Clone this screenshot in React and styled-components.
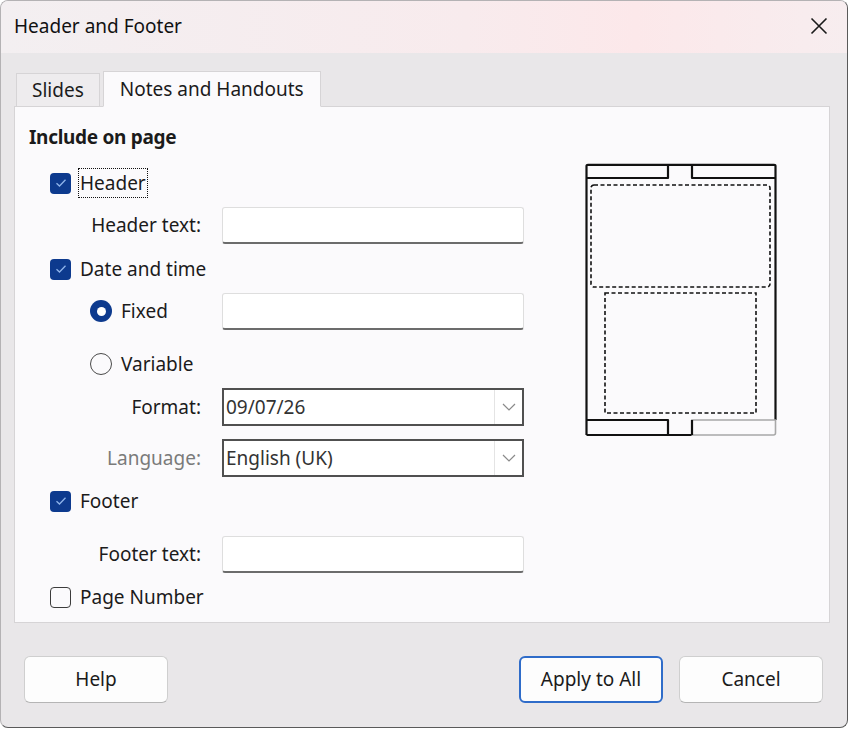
import React from "react";
import styled, { createGlobalStyle } from "styled-components";

const GlobalStyle = createGlobalStyle`
  html, body {
    margin: 0;
    padding: 0;
    background: #ffffff;
  }
  body {
    font-family: "Noto Sans", "Open Sans", sans-serif;
    color: #1b1b1b;
  }
`;

const Window = styled.div`
  width: 848px;
  height: 728px;
  box-sizing: border-box;
  display: flex;
  flex-direction: column;
  border: 1px solid #b4b2b4;
  border-right-color: #5a5a5a;
  border-bottom-color: #5a5a5a;
  border-radius: 8px;
  overflow: hidden;
  background: #e9e7e9;
`;

const TitleBar = styled.div`
  height: 52px;
  flex: none;
  display: flex;
  align-items: center;
  justify-content: space-between;
  padding: 0 10px 2px 13px;
  box-sizing: border-box;
  background: linear-gradient(90deg, #f3eff1 0%, #f8ebed 55%, #fce8ea 75%, #f7edef 100%);
`;

const Title = styled.div`
  font-size: 19px;
  color: #111;
`;

const CloseButton = styled.button`
  width: 36px;
  height: 36px;
  border: none;
  background: transparent;
  display: flex;
  align-items: center;
  justify-content: center;
  padding: 0;
`;

const Body = styled.div`
  flex: 1;
  display: flex;
  flex-direction: column;
  padding: 17px 17px 0 13px;
`;

const TabBar = styled.div`
  display: flex;
  align-items: flex-end;
  gap: 3px;
  padding-left: 2px;
  height: 36px;
  position: relative;
  z-index: 1;
`;

const Tab = styled.div`
  height: ${(p) => (p.$active ? "36px" : "34px")};
  box-sizing: border-box;
  padding: 0 ${(p) => (p.$active ? "16px" : "15px")};
  display: flex;
  align-items: center;
  font-size: 19px;
  background: ${(p) => (p.$active ? "#fbfafc" : "#eeecee")};
  border: 1px solid #d6d4d6;
  border-bottom: ${(p) => (p.$active ? "1px solid #fbfafc" : "1px solid #d6d4d6")};
  margin-bottom: -1px;
  color: #1b1b1b;
`;

const Panel = styled.div`
  height: 517px;
  box-sizing: border-box;
  background: #fbfafc;
  border: 1px solid #d6d4d6;
  display: flex;
  padding: 18px 0 0 14px;
`;

const Form = styled.div`
  width: 540px;
  display: flex;
  flex-direction: column;
`;

const Heading = styled.div`
  font-size: 19px;
  font-weight: 700;
  height: 24px;
  line-height: 24px;
  letter-spacing: -0.3px;
  margin-bottom: 15px;
`;

const Row = styled.div`
  height: 38px;
  display: flex;
  align-items: center;
  margin-top: ${(p) => p.$gap || 0}px;
  padding-left: ${(p) => p.$indent || 0}px;
`;

const FieldLabel = styled.div`
  width: 172px;
  flex: none;
  text-align: right;
  font-size: 19px;
  color: ${(p) => (p.$disabled ? "#7a7a7a" : "#1b1b1b")};
  margin-right: 21px;
`;

const OptionGroup = styled.div`
  width: 172px;
  flex: none;
  margin-right: 21px;
  display: flex;
  align-items: center;
  padding-left: 61px;
  box-sizing: border-box;
`;

const Check = styled.span`
  width: 21px;
  height: 21px;
  box-sizing: border-box;
  border-radius: 4px;
  flex: none;
  display: flex;
  align-items: center;
  justify-content: center;
  background: ${(p) => (p.$on ? "#0d3a8e" : "#fbfafc")};
  border: ${(p) => (p.$on ? "none" : "1.5px solid #3c3c3c")};
  margin-right: 9px;
`;

const Radio = styled.span`
  width: 22px;
  height: 22px;
  box-sizing: border-box;
  border-radius: 50%;
  flex: none;
  margin-right: 9px;
  display: flex;
  align-items: center;
  justify-content: center;
  background: ${(p) => (p.$on ? "#0d3a8e" : "#fbfafc")};
  border: ${(p) => (p.$on ? "none" : "1.5px solid #4a4a4a")};
  &::after {
    content: "";
    display: ${(p) => (p.$on ? "block" : "none")};
    width: 9px;
    height: 9px;
    border-radius: 50%;
    background: #ffffff;
  }
`;

const OptionText = styled.span`
  font-size: 19px;
  color: #1b1b1b;
  padding: 1px 1px;
  margin-left: -2px;
  border: 1px dotted ${(p) => (p.$focus ? "#111" : "transparent")};
`;

const TextInput = styled.div`
  width: 302px;
  height: 37px;
  box-sizing: border-box;
  background: #ffffff;
  border: 1px solid #dedede;
  border-bottom: 2px solid #6c6c6c;
  border-radius: 3px;
`;

const Select = styled.div`
  width: 302px;
  height: 38px;
  box-sizing: border-box;
  background: #ffffff;
  border: 2px solid #505050;
  display: flex;
  align-items: stretch;
`;

const SelectValue = styled.div`
  flex: 1;
  display: flex;
  align-items: center;
  padding-left: 2px;
  font-size: 19px;
  color: #333;
`;

const SelectArrow = styled.div`
  width: 27px;
  border-left: 1px solid #e4e4e4;
  display: flex;
  align-items: center;
  justify-content: center;
`;

const Preview = styled.div`
  margin-left: 16px;
  padding-top: 38px;
`;

const ButtonBar = styled.div`
  flex: 1;
  display: flex;
  align-items: center;
  padding: 8px 7px 0 10px;
  gap: 16px;
`;

const Spacer = styled.div`
  flex: 1;
`;

const Button = styled.button`
  width: 144px;
  height: 47px;
  box-sizing: border-box;
  font-family: inherit;
  font-size: 19px;
  color: #1b1b1b;
  background: #fdfdfd;
  border: ${(p) => (p.$primary ? "2px solid #2f6cc9" : "1px solid #cfcfcf")};
  border-bottom-color: ${(p) => (p.$primary ? "#2f6cc9" : "#b5b5b5")};
  border-radius: 6px;
  padding: 0;
`;

const CheckMark = () => (
  <svg width="12" height="10" viewBox="0 0 12 10">
    <path d="M1.5 5.2 L4.5 8 L10.5 1.8" fill="none" stroke="#8fb4ea" strokeWidth="1.3" />
  </svg>
);

const Chevron = () => (
  <svg width="14" height="8" viewBox="0 0 14 8">
    <path d="M1 1 L7 7 L13 1" fill="none" stroke="#8a8a8a" strokeWidth="1.2" />
  </svg>
);

const CheckRow = ({ on, focus, label, gap }) => (
  <Row $gap={gap} $indent={21}>
    <Check $on={on}>{on && <CheckMark />}</Check>
    <OptionText $focus={focus}>{label}</OptionText>
  </Row>
);

const PagePreview = () => (
  <svg width="192" height="274" viewBox="0 0 192 274">
    <g fill="none" stroke="#111" strokeWidth="2.2" strokeLinejoin="round">
      <path d="M1.5 272 V3 Q1.5 1.8 3 1.8 H189 Q190.5 1.8 190.5 3 V257" />
      <path d="M1.5 15 H83 V2" />
      <path d="M107 2 V15 H190.5" />
      <path d="M1.5 257 H83 V272" />
      <path d="M1.5 272 H107" />
    </g>
    <path d="M107 257 H190.5 V270 Q190.5 272 188.5 272 H107 Z" fill="none" stroke="#a8a8a8" strokeWidth="1.6" />
    <path d="M107 257 V272" stroke="#111" strokeWidth="2.2" />
    <g fill="none" stroke="#111" strokeWidth="1.6" strokeDasharray="4 2.5">
      <rect x="6" y="22" width="179" height="102" rx="3" />
      <rect x="20" y="130" width="151" height="120" />
    </g>
  </svg>
);

export default function App() {
  return (
    <>
      <GlobalStyle />
      <Window>
        <TitleBar>
          <Title>Header and Footer</Title>
          <CloseButton aria-label="Close">
            <svg width="18" height="18" viewBox="0 0 18 18">
              <path d="M1.5 1.5 L16.5 16.5 M16.5 1.5 L1.5 16.5" stroke="#1a1a1a" strokeWidth="1.6" />
            </svg>
          </CloseButton>
        </TitleBar>
        <Body>
          <TabBar>
            <Tab>Slides</Tab>
            <Tab $active>Notes and Handouts</Tab>
          </TabBar>
          <Panel>
            <Form>
              <Heading>Include on page</Heading>
              <CheckRow on focus label="Header" />
              <Row $gap={4}>
                <FieldLabel>Header text:</FieldLabel>
                <TextInput />
              </Row>
              <CheckRow on label="Date and time" gap={6} />
              <Row $gap={4}>
                <OptionGroup>
                  <Radio $on />
                  <OptionText>Fixed</OptionText>
                </OptionGroup>
                <TextInput />
              </Row>
              <Row $gap={15}>
                <OptionGroup>
                  <Radio />
                  <OptionText>Variable</OptionText>
                </OptionGroup>
              </Row>
              <Row $gap={5}>
                <FieldLabel>Format:</FieldLabel>
                <Select>
                  <SelectValue>09/07/26</SelectValue>
                  <SelectArrow>
                    <Chevron />
                  </SelectArrow>
                </Select>
              </Row>
              <Row $gap={13}>
                <FieldLabel $disabled>Language:</FieldLabel>
                <Select>
                  <SelectValue>English (UK)</SelectValue>
                  <SelectArrow>
                    <Chevron />
                  </SelectArrow>
                </Select>
              </Row>
              <CheckRow on label="Footer" gap={5} />
              <Row $gap={15}>
                <FieldLabel>Footer text:</FieldLabel>
                <TextInput />
              </Row>
              <CheckRow label="Page Number" gap={5} />
            </Form>
            <Preview>
              <PagePreview />
            </Preview>
          </Panel>
          <ButtonBar>
            <Button>Help</Button>
            <Spacer />
            <Button $primary>Apply to All</Button>
            <Button>Cancel</Button>
          </ButtonBar>
        </Body>
      </Window>
    </>
  );
}
